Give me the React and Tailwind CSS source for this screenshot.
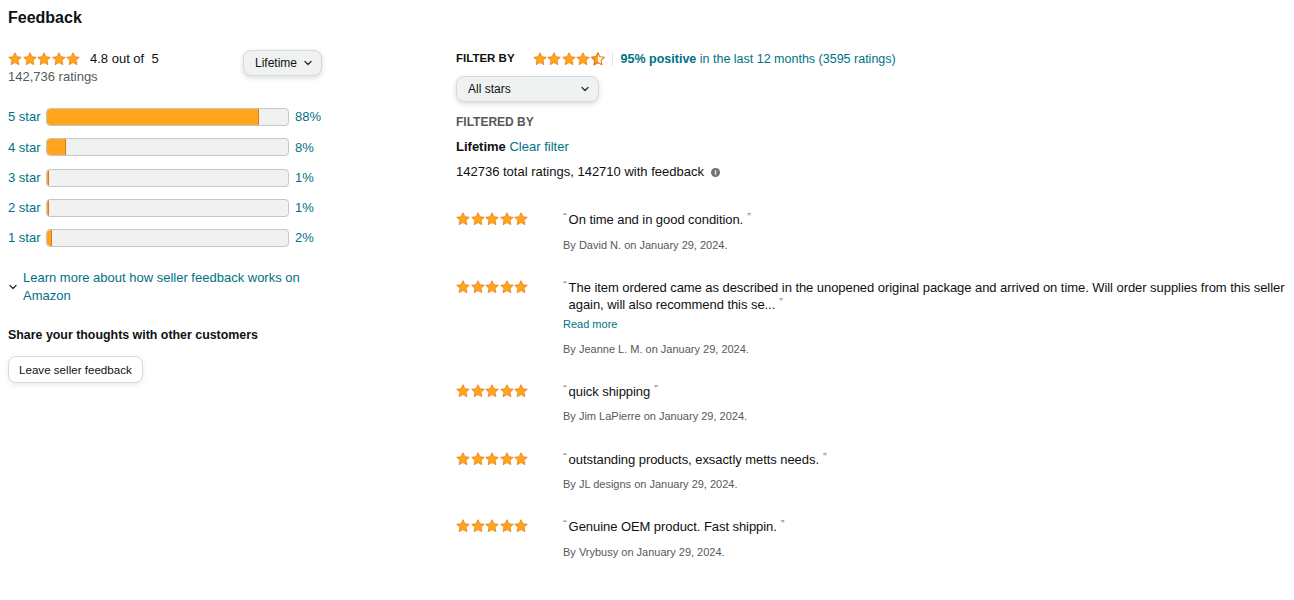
import { useId } from "react";

const STAR_PATH =
  "M12 1.2l3.3 6.9 7.5.95-5.5 5.2 1.45 7.5L12 18.1l-6.75 3.65 1.45-7.5-5.5-5.2 7.5-.95z";

function Star({ half = false }) {
  const id = useId();
  return (
    <svg width="14" height="14" viewBox="0 0 24 24" className="shrink-0">
      {half && (
        <defs>
          <clipPath id={id}>
            <rect x="0" y="0" width="12" height="24" />
          </clipPath>
        </defs>
      )}
      {half ? (
        <>
          <path d={STAR_PATH} fill="#fff" stroke="#e47911" strokeWidth="1.8" strokeLinejoin="round" />
          <path d={STAR_PATH} fill="#ffa41c" stroke="#e47911" strokeWidth="1.8" strokeLinejoin="round" clipPath={`url(#${id})`} />
        </>
      ) : (
        <path d={STAR_PATH} fill="#ffa41c" stroke="#e47911" strokeWidth="1.2" strokeLinejoin="round" />
      )}
    </svg>
  );
}

function Stars({ half = false }) {
  return (
    <div className="flex items-center gap-[0.5px]">
      <Star />
      <Star />
      <Star />
      <Star />
      <Star half={half} />
    </div>
  );
}

function Chevron({ className = "" }) {
  return (
    <svg width="10" height="10" viewBox="0 0 10 10" className={className}>
      <path d="M2 3.5l3 3 3-3" fill="none" stroke="#333" strokeWidth="1.4" strokeLinecap="round" strokeLinejoin="round" />
    </svg>
  );
}

const bars = [
  { label: "5 star", pct: 88 },
  { label: "4 star", pct: 8 },
  { label: "3 star", pct: 1 },
  { label: "2 star", pct: 1 },
  { label: "1 star", pct: 2 },
];

const reviews = [
  { text: "On time and in good condition.", by: "David N." },
  {
    text: "The item ordered came as described in the unopened original package and arrived on time. Will order supplies from this seller again, will also recommend this se...",
    by: "Jeanne L. M.",
    more: true,
  },
  { text: "quick shipping", by: "Jim LaPierre" },
  { text: "outstanding products, exsactly metts needs.", by: "JL designs" },
  { text: "Genuine OEM product. Fast shippin.", by: "Vrybusy" },
];

export default function App() {
  return (
    <div className="min-h-[600px] bg-white py-2 pl-2 text-[#0f1111] font-['Liberation_Sans',Arial,sans-serif]">
      <h2 className="text-[16px] leading-[20px] font-bold">Feedback</h2>

      <div className="flex">
        {/* left column */}
        <div className="w-[314px] shrink-0">
          <div className="mt-[22px] flex items-start justify-between">
            <div>
              <div className="flex h-[18px] items-center">
                <Stars />
                <span className="ml-[10px] text-[13px] leading-[18px]">4.8 out of&nbsp; 5</span>
              </div>
              <div className="text-[13px] leading-[18px] text-[#565959]">142,736 ratings</div>
            </div>
            <button className="flex h-[26px] items-center gap-[6px] rounded-[8px] border border-[#d5d9d9] bg-[#f0f2f2] pl-[11px] pr-[8px] text-[12px] shadow-[0_2px_5px_rgba(15,17,17,0.15)]">
              Lifetime
              <Chevron />
            </button>
          </div>

          <div className="mt-[22px] flex flex-col gap-[12.3px]">
            {bars.map((b) => (
              <div key={b.label} className="flex h-[18px] items-center">
                <span className="w-[38px] text-[13px] text-[#007185]">{b.label}</span>
                <div className="h-[18px] w-[243px] overflow-hidden rounded-[4px] border border-[#c7c7c7] bg-[#f0f2f2]">
                  <div
                    className="h-full rounded-l-[3px] border-r border-[#e47911] bg-[#ffa41c]"
                    style={{ width: `${b.pct}%` }}
                  />
                </div>
                <span className="ml-[6px] text-[13px] text-[#007185]">{b.pct}%</span>
              </div>
            ))}
          </div>

          <div className="mt-[22px] flex items-center">
            <Chevron className="mr-[5px] shrink-0" />
            <a className="text-[13px] leading-[18px] text-[#007185]">
              Learn more about how seller feedback works on Amazon
            </a>
          </div>

          <div className="mt-[20px] text-[12.4px] leading-[20px] font-bold">
            Share your thoughts with other customers
          </div>
          <button className="mt-[11px] h-[27px] rounded-[8px] border border-[#d5d9d9] bg-white px-[10px] text-[11.6px] shadow-[0_2px_5px_rgba(213,217,217,0.5)]">
            Leave seller feedback
          </button>
        </div>

        {/* right column */}
        <div className="ml-[134px] min-w-0 flex-1">
          <div className="mt-[21px] flex h-[20px] items-center">
            <span className="text-[11.5px] font-bold">FILTER BY</span>
            <div className="ml-[18px]">
              <Stars half />
            </div>
            <span className="ml-[7px] mr-[8px] h-[14px] w-px bg-[#e3e6e6]" />
            <span className="text-[12.5px] text-[#007185]">
              <b>95% positive</b> in the last 12 months (3595 ratings)
            </span>
          </div>

          <button className="mt-[7px] flex h-[26px] w-[143px] items-center justify-between rounded-[8px] border border-[#d5d9d9] bg-[#f0f2f2] pl-[11px] pr-[8px] text-[12px] shadow-[0_2px_5px_rgba(15,17,17,0.15)]">
            All stars
            <Chevron />
          </button>

          <div className="mt-[12px] text-[12px] leading-[16px] font-bold text-[#565959]">FILTERED BY</div>
          <div className="mt-[8px] text-[13px] leading-[18px]">
            <b>Lifetime</b> <a className="text-[#007185]">Clear filter</a>
          </div>
          <div className="mt-[7px] flex items-center text-[13px] leading-[18px]">
            142736 total ratings, 142710 with feedback
            <span className="ml-[7px] flex h-[9px] w-[9px] items-center justify-center rounded-full bg-[#6f7373] text-[7px] leading-none font-bold text-white">
              i
            </span>
          </div>

          <div className="mt-[30px] flex flex-col gap-[26.2px]">
            {reviews.map((r) => (
              <div key={r.by} className="flex">
                <div className="w-[107px] shrink-0 pt-[1px]">
                  <Stars />
                </div>
                <div className="min-w-0 flex-1">
                  <div className="flex text-[13px] leading-[17px] tracking-[-0.06px]">
                    <span className="mr-[2px] text-[11px] leading-[13px] text-[#767676]">“</span>
                    <p>
                      {r.text}
                      <span className="relative -top-[3px] ml-[4px] text-[11px] leading-[11px] text-[#767676]">”</span>
                    </p>
                  </div>
                  {r.more && (
                    <div className="mt-[3px] text-[11px] leading-[16px] text-[#007185]">Read more</div>
                  )}
                  <div className={`${r.more ? "mt-[9px]" : "mt-[8.5px]"} text-[11px] leading-[16px] text-[#565959]`}>
                    By {r.by} on January 29, 2024.
                  </div>
                </div>
              </div>
            ))}
          </div>
        </div>
      </div>
    </div>
  );
}
